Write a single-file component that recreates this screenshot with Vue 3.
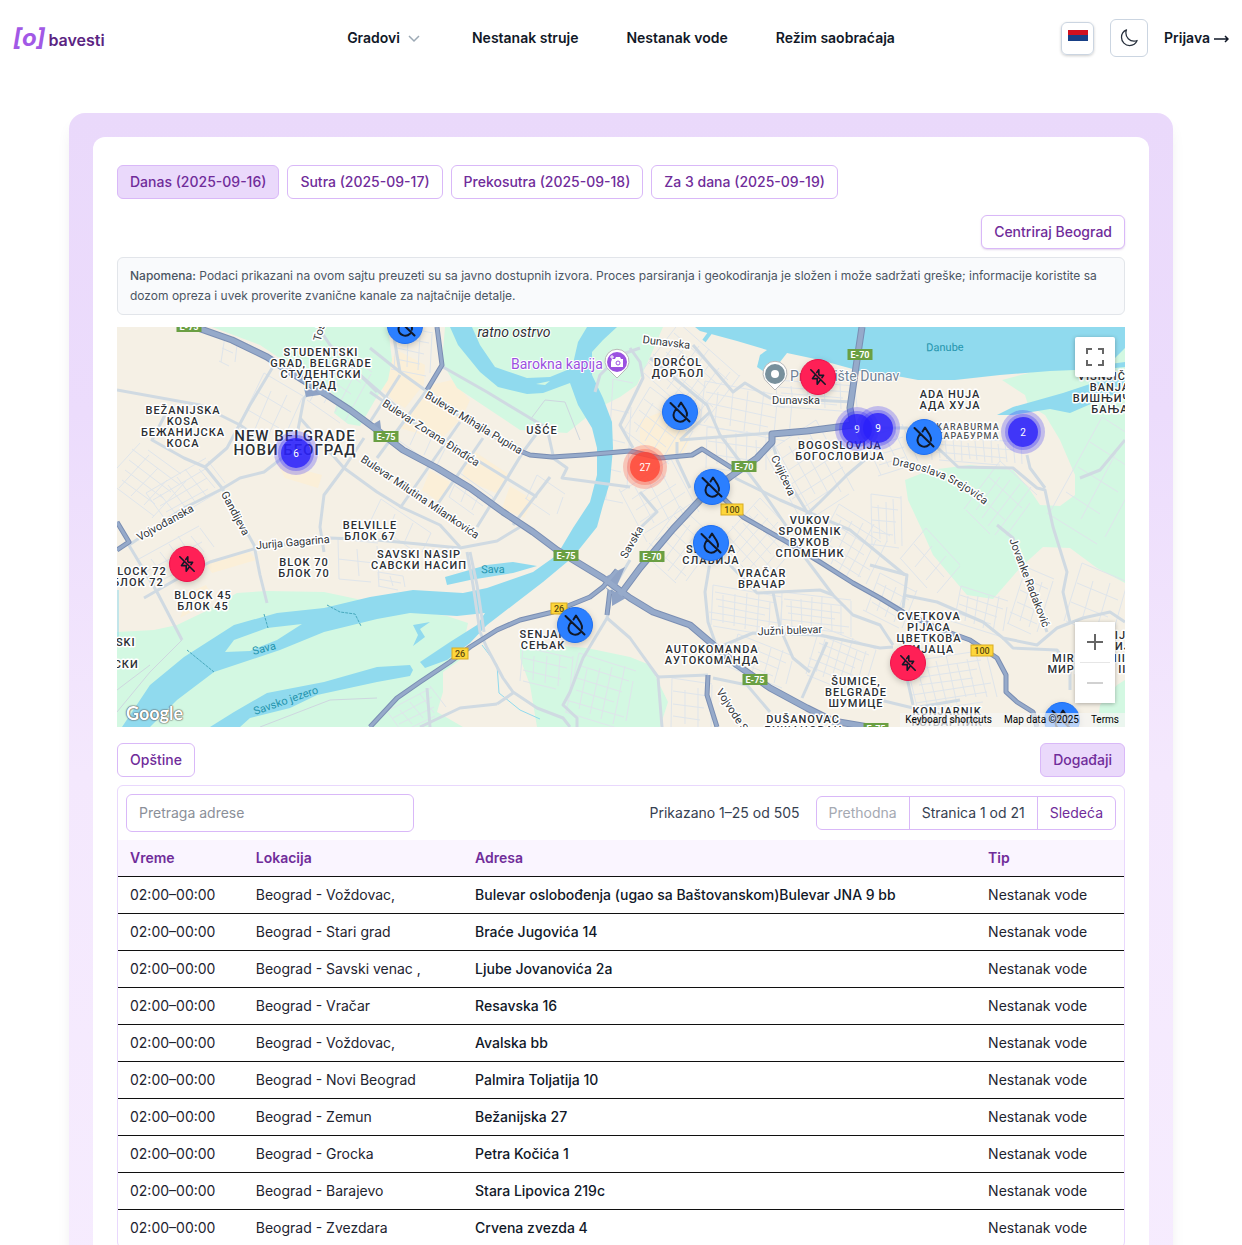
<script setup>
import { ref } from 'vue'

const navLinks = ['Nestanak struje', 'Nestanak vode', 'Režim saobraćaja']

const days = [
  'Danas (2025-09-16)',
  'Sutra (2025-09-17)',
  'Prekosutra (2025-09-18)',
  'Za 3 dana (2025-09-19)',
]
const activeDay = ref(0)
const query = ref('')

const rows = [
  ['02:00–00:00', 'Beograd - Voždovac,', 'Bulevar oslobođenja (ugao sa Baštovanskom)Bulevar JNA 9 bb', 'Nestanak vode'],
  ['02:00–00:00', 'Beograd - Stari grad', 'Braće Jugovića 14', 'Nestanak vode'],
  ['02:00–00:00', 'Beograd - Savski venac ,', 'Ljube Jovanovića 2a', 'Nestanak vode'],
  ['02:00–00:00', 'Beograd - Vračar', 'Resavska 16', 'Nestanak vode'],
  ['02:00–00:00', 'Beograd - Voždovac,', 'Avalska bb', 'Nestanak vode'],
  ['02:00–00:00', 'Beograd - Novi Beograd', 'Palmira Toljatija 10', 'Nestanak vode'],
  ['02:00–00:00', 'Beograd - Zemun', 'Bežanijska 27', 'Nestanak vode'],
  ['02:00–00:00', 'Beograd - Grocka', 'Petra Kočića 1', 'Nestanak vode'],
  ['02:00–00:00', 'Beograd - Barajevo', 'Stara Lipovica 219c', 'Nestanak vode'],
  ['02:00–00:00', 'Beograd - Zvezdara', 'Crvena zvezda 4', 'Nestanak vode'],
]

/* ---- map geometry: all points share the viewBox of the map ---- */
const parks = [
  '212,327 260,345 300,372 325,385 338,400 334,413 348,424 360,426 375,400 388,380 392,360 388,327',
  '445,327 442,362 457,388 520,430 567,433 583,420 600,407 620,397 637,385 650,357 663,327',
  '1002,380 1025,395 1028,405 1045,415 1060,440 1075,475 1075,495 1060,506 1040,505 1030,490 1013,470 970,465 930,470 905,480 908,500 922,530 933,555 967,595 993,599 1020,568 1043,547 1070,548 1097,568 1125,583 1125,348 1090,360 1040,370',
  '117,632 154,630 177,625 204,612 237,593 267,591 324,592 357,599 377,606 447,616 468,623 460,660 443,672 443,692 437,712 463,727 117,727',
  '520,642 550,645 587,648 630,657 650,665 668,702 660,727 537,727 530,685 520,658',
  '1100,705 1117,685 1125,680 1125,727 1097,727',
]
const blocks = [
  '377,383 397,350 425,365 424,384 405,408 395,402',
  '430,385 452,380 470,400 462,418 440,440 400,428',
  '466,462 475,452 508,474 498,494 462,478',
  '510,486 534,500 524,518 502,508',
  '430,470 450,482 440,503 422,490',
  '277,463 322,475 318,488 285,478',
  '190,592 206,585 214,600 180,618',
  '640,420 672,408 690,440 680,460 640,450',
  '205,563 250,552 256,560 212,573',
]
const waters = [
  '695,327 700,331 737,341 767,350 760,355 757,367 763,371 780,362 787,353 820,360 860,371 902,377 918,380 955,380 1000,375 1050,371 1075,370 1115,358 1125,348 1125,327',
  '997,415 1013,407 1063,393 1090,384 1125,376 1125,390 1100,400 1070,413 1050,409 1013,415',
  '1095,366 1125,362 1125,367 1095,370',
  '450,327 458,345 480,372 498,387 527,394 543,393 570,383 578,405 592,428 597,448 597,475 590,502 573,528 557,555 533,572 510,580 487,588 463,593 413,590 370,597 324,608 277,613 234,625 184,657 150,685 122,727 150,727 177,700 214,672 250,660 280,650 324,632 377,619 410,613 457,616 485,613 477,625 450,642 420,662 425,668 447,660 470,643 487,625 517,602 543,582 573,557 597,527 603,505 610,482 613,448 612,422 603,398 592,375 592,352 603,340 617,327 587,327 578,342 572,368 550,377 527,378 495,367 480,345 472,327',
  '210,727 234,712 267,693 324,682 377,667 410,665 413,670 410,676 377,682 317,695 290,708 250,718 240,727',
  '445,577 487,565 513,562 537,566 513,573 470,580 447,585',
  '413,625 430,622 420,629 425,637 413,646 418,635',
]
const island = '225,652 234,640 267,628 302,624 277,640 250,651'

/* A block of side streets: cols x rows lines, turned by `deg` round its centre. */
function grid(cx, cy, w, h, deg, cols, lines) {
  const a = (deg * Math.PI) / 180
  const pt = (x, y) =>
    `${Math.round(cx + x * Math.cos(a) - y * Math.sin(a))} ${Math.round(cy + x * Math.sin(a) + y * Math.cos(a))}`
  let d = ''
  for (let i = 0; i <= cols; i++) {
    const x = -w / 2 + (w * i) / cols
    const cut = ((i * 7) % 4) * (h / 14)
    d += `M${pt(x, -h / 2 + cut)}L${pt(x + 3, h / 2 - cut / 2)}`
  }
  for (let j = 0; j <= lines; j++) {
    const y = -h / 2 + (h * j) / lines
    const cut = ((j * 5) % 4) * (w / 14)
    d += `M${pt(-w / 2 + cut / 2, y)}L${pt(w / 2 - cut, y + 2)}`
  }
  return d
}
const sideStreets = [
  grid(185, 490, 70, 36, -32, 6, 4),
  grid(145, 480, 50, 60, -50, 5, 4),
  grid(270, 410, 46, 60, 28, 3, 3),
  grid(228, 350, 14, 26, 15, 1, 2),
  grid(175, 555, 70, 30, -30, 6, 2),
  grid(340, 385, 40, 60, 32, 3, 4),
  grid(412, 350, 36, 44, 8, 3, 4),
  grid(690, 372, 80, 60, 40, 8, 6),
  grid(660, 425, 60, 50, 35, 5, 4),
  grid(745, 410, 90, 44, 10, 6, 4),
  grid(815, 395, 80, 26, 3, 5, 4),
  grid(735, 450, 60, 40, 5, 6, 3),
  grid(660, 500, 60, 60, 60, 5, 4),
  grid(680, 545, 50, 60, 40, 5, 5),
  grid(810, 470, 80, 60, 60, 6, 5),
  grid(760, 540, 60, 60, 45, 6, 6),
  grid(850, 545, 60, 60, 30, 6, 6),
  grid(745, 610, 70, 40, 8, 6, 6),
  grid(815, 615, 70, 40, 5, 7, 6),
  grid(760, 660, 60, 34, 20, 5, 4),
  grid(840, 660, 60, 50, 20, 7, 6),
  grid(890, 600, 40, 40, 25, 4, 4),
  grid(690, 705, 40, 50, 5, 3, 4),
  grid(950, 680, 80, 50, -10, 8, 6),
  grid(980, 610, 50, 36, 15, 5, 4),
  grid(1030, 600, 30, 60, 20, 3, 5),
  grid(975, 450, 90, 24, 3, 12, 3),
  grid(890, 450, 40, 40, -20, 4, 4),
  grid(1000, 500, 50, 60, 40, 5, 3),
  grid(885, 520, 30, 50, 2, 4, 4),
  grid(930, 560, 50, 40, 45, 3, 2),
  grid(1095, 600, 50, 60, 20, 3, 3),
  grid(1100, 480, 60, 110, 30, 2, 4),
  grid(600, 690, 60, 60, 15, 5, 5),
  grid(545, 668, 50, 34, 10, 4, 3),
  grid(415, 710, 50, 26, -30, 4, 3),
  grid(390, 580, 26, 14, 5, 2, 2),
  grid(545, 495, 34, 26, 30, 1, 1),
  grid(470, 495, 40, 26, 33, 3, 2),
  grid(420, 440, 50, 24, 33, 3, 1),
  grid(400, 525, 60, 24, 33, 3, 1),
  grid(357, 560, 40, 40, 2, 2, 2),
  grid(618, 440, 20, 120, 5, 1, 4),
]

const streets = [
  'M117 390L200 405L240 425L257 437', 'M274 365L250 405L227 448L205 467',
  'M165 415L152 440L184 458L205 467L222 488L254 545L260 575L267 603',
  'M314 388L304 398L297 435L290 452L264 472L240 478L220 490L184 508L129 545',
  'M300 418L344 468L377 492L403 508L440 525L460 547', 'M364 438L344 468L324 495L320 527L324 552',
  'M144 598L184 575L210 562L257 548L330 538L377 540L460 548L497 541L520 527',
  'M127 542L157 592L182 640', 'M377 392L330 345L318 327', 'M318 372L360 375L400 410',
  'M467 552L473 585L480 632L487 648L503 678L513 692L537 708L563 718L570 727',
  'M470 552L477 585L484 632', 'M497 704L513 693', 'M427 688L430 727', 'M420 727L460 708L497 704',
  'M630 560L612 590L607 618L583 658L570 692L563 705L577 718L577 727', 'M607 618L630 638L640 652L658 677L662 727',
  'M658 677L708 675', 'M710 562L705 592L708 622L715 642', 'M717 648L753 633L820 635L880 648L893 647',
  'M730 565L757 593L820 590L833 595L853 615L880 625L893 645', 'M773 592L780 628L793 658L810 672',
  'M827 642L802 698', 'M803 555L833 595', 'M713 678L747 685L770 712',
  'M630 348L640 362L643 378L620 425L633 448', 'M693 345L733 392L745 383L770 398L853 402',
  'M650 358L707 405L720 435L760 488L787 527', 'M680 440L710 412', 'M680 440L770 433', 'M677 442L677 460L690 488',
  'M773 445L780 468L807 512L820 535', 'M867 458L847 475L820 502L803 518', 'M640 492L657 512L640 528',
  'M870 428L907 428L940 450L958 467L1013 468L1037 488L1045 490L1053 527L1067 572L1063 592L1070 622',
  'M1027 455L1030 468L1045 488', 'M870 565L907 575L903 608',
  'M903 595L937 602L983 622L1003 638L1037 645L1057 628L1083 618L1110 612L1125 622',
  'M1003 638L1013 648L1057 650L1070 668L1070 690', 'M907 678L913 705', 'M880 700L913 708L960 700',
  'M997 525L1013 538L1047 632', 'M1125 440L1100 470L1080 478', 'M735 478L780 500L850 530L905 575',
  'M443 367L487 392L530 418L547 428L553 455', 'M400 375L370 422', 'M393 332L400 372L425 390',
  'M370 348L400 372', 'M370 392L413 422L480 462L537 497', 'M427 390L377 458', 'M460 422L400 508', 'M483 438L437 505',
  'M543 425L523 452L503 485L477 527', 'M550 477L513 525', 'M553 458L567 468L562 478L630 487',
  'M427 390L470 425L523 452', 'M595 392L600 375L620 355L640 348',
]
const paths = ['M182 640L150 672L117 712', 'M260 727L330 700L377 698', 'M117 690L150 665', 'M530 420L545 400L565 402L580 440']

const highways = [
  'M195 327L232 340L267 357L290 372L327 395L350 410L377 430L403 450L437 468L470 488L503 512L533 532L557 550L603 578L630 598L653 612L690 625L710 642L737 665L770 688L807 708L833 721L880 729',
  'M862 327L857 360L850 408L853 425L807 431L772 434L772 442L757 458L730 477L700 500L673 529L640 568L620 595',
]
const arterials = [
  'M437 327L442 365L427 390', 'M515 449L530 455L552 457L583 455L630 451L660 458L692 455L702 449L732 468',
  'M720 495L743 517L787 542L820 562L853 583L880 598L903 612L937 628L970 640L997 658L1006 675L1006 692L1017 702L1033 712L1037 727',
  'M370 727L397 698L420 682L450 662L470 647L497 630L520 620L553 612L590 597L603 587L617 570',
  'M708 675L707 695L717 727', 'M117 522L129 542L117 550', 'M610 590L607 615',
]
const junctions = ['617,600 603,585 612,592 622,592', '603,578 625,567 616,588', '370,426 380,420 382,436', '304,388 326,394 306,397', '612,606 612,590 626,598']
const creeks = ['M482 645L497 665L499 693L520 710L540 719', 'M118 590V640']
const ferries = ['M264 614L268 628', 'M187 650L214 672', 'M327 605L340 612L355 614L361 626']

const areas = [
  { x: 321, y: 356, lines: ['STUDENTSKI', 'GRAD, BELGRADE', 'СТУДЕНТСКИ', 'ГРАД'] },
  { x: 183, y: 414, lines: ['BEŽANIJSKA', 'KOSA', 'БЕЖАНИЈСКА', 'КОСА'] },
  { x: 542, y: 434, lines: ['UŠĆE'] },
  { x: 678, y: 366, lines: ['DORĆOL', 'ДОРЋОЛ'] },
  { x: 840, y: 449, lines: ['BOGOSLOVIJA', 'БОГОСЛОВИЈА'] },
  { x: 950, y: 398, lines: ['ADA HUJA', 'АДА ХУЈА'] },
  { x: 1110, y: 380, lines: ['VIŠNJIČKA', 'BANJA', 'ВИШЊИЧКА', 'БАЊА'] },
  { x: 810, y: 524, lines: ['VUKOV', 'SPOMENIK', 'ВУКОВ', 'СПОМЕНИК'] },
  { x: 370, y: 529, lines: ['BELVILLE', 'БЛОК 67'] },
  { x: 419, y: 558, lines: ['SAVSKI NASIP', 'САВСКИ НАСИП'] },
  { x: 304, y: 566, lines: ['BLOK 70', 'БЛОК 70'] },
  { x: 203, y: 599, lines: ['BLOCK 45', 'БЛОК 45'] },
  { x: 138, y: 575, lines: ['BLOCK 72', 'БЛОК 72'] },
  { x: 114, y: 646, lines: ['SAVSKI', '', 'САВСКИ'] },
  { x: 762, y: 577, lines: ['VRAČAR', 'ВРАЧАР'] },
  { x: 711, y: 553, lines: ['SLAVIJA', 'СЛАВИЈА'] },
  { x: 543, y: 638, lines: ['SENJAK', 'СЕЊАК'] },
  { x: 712, y: 653, lines: ['AUTOKOMANDA', 'АУТОКОМАНДА'] },
  { x: 929, y: 620, lines: ['CVETKOVA', 'PIJACA', 'ЦВЕТКОВА', 'ПИЈАЦА'] },
  { x: 856, y: 685, lines: ['ŠUMICE,', 'BELGRADE', 'ШУМИЦЕ'] },
  { x: 803, y: 723, lines: ['DUŠANOVAC', 'ДУШАНОВАЦ'] },
  { x: 947, y: 715, lines: ['KONJARNIK', 'КОЊАРНИК'] },
  { x: 1089, y: 662, lines: ['MIRIJEVO III', 'МИРИЈЕВО III'] },
  { x: 1121, y: 639, lines: ['MIRIJEVO', 'МИРИЈЕВО'] },
  { x: 295, y: 441, size: 'city', step: 14, lines: ['NEW BELGRADE', 'НОВИ БЕОГРАД'] },
  { x: 968, y: 430, size: 'minor', step: 9, lines: ['KARABURMA', 'КАРАБУРМА'] },
]

const roadNames = [
  { x: 666, y: 346, r: 7, t: 'Dunavska' },
  { x: 796, y: 404, r: 0, t: 'Dunavska' },
  { x: 472, y: 426, r: 31, t: 'Bulevar Mihajla Pupina' },
  { x: 429, y: 436, r: 33, t: 'Bulevar Zorana Đinđića' },
  { x: 418, y: 500, r: 34, t: 'Bulevar Milutina Milankovića' },
  { x: 293, y: 546, r: -5, t: 'Jurija Gagarina' },
  { x: 167, y: 526, r: -29, t: 'Vojvođanska' },
  { x: 232, y: 515, r: 62, t: 'Gandijeva' },
  { x: 635, y: 544, r: -60, t: 'Savska' },
  { x: 780, y: 477, r: 65, t: 'Cvijićeva' },
  { x: 790, y: 634, r: -2, t: 'Južni bulevar' },
  { x: 1026, y: 584, r: 69, t: 'Jovanke Radaković' },
  { x: 735, y: 721, r: 57, t: 'Vojvode Stepe' },
  { x: 328, y: 314, r: -75, t: 'Tošin bunar' },
]
const waterNames = [
  { x: 945, y: 351, r: -1, t: 'Danube' },
  { x: 265, y: 652, r: -15, t: 'Sava' },
  { x: 493, y: 573, r: -1, t: 'Sava' },
  { x: 287, y: 704, r: -19, t: 'Savsko jezero' },
]

const shields = [
  { x: 189, y: 326, t: 'E-75' }, { x: 386, y: 436, t: 'E-75' }, { x: 566, y: 555, t: 'E-75' },
  { x: 755, y: 679, t: 'E-75' }, { x: 876, y: 728, t: 'E-75' }, { x: 744, y: 466, t: 'E-70' },
  { x: 860, y: 354, t: 'E-70' }, { x: 652, y: 556, t: 'E-70' },
  { x: 460, y: 653, t: '26', local: true }, { x: 559, y: 608, t: '26', local: true },
  { x: 732, y: 509, t: '100', local: true }, { x: 982, y: 650, t: '100', local: true },
]
const shieldWidth = (s) => (s.local ? (s.t.length > 2 ? 22 : 16) : 25)

const clusters = [
  { x: 296, y: 453, n: 6 }, { x: 857, y: 429, n: 9 }, { x: 878, y: 428, n: 9 },
  { x: 1023, y: 432, n: 2 }, { x: 645, y: 467, n: 27, hot: true },
]
const markers = [
  { x: 405, y: 326 }, { x: 680, y: 412 }, { x: 924, y: 437 }, { x: 712, y: 487 },
  { x: 711, y: 543 }, { x: 575, y: 625 }, { x: 1062, y: 720 },
  { x: 187, y: 564, power: true }, { x: 818, y: 377, power: true }, { x: 908, y: 663, power: true },
]
</script>

<template>
  <div class="page">
    <header class="topbar">
      <a class="brand" href="#"><span class="brand-mark">[o]</span><span class="brand-name">bavesti</span></a>
      <nav class="nav">
        <button class="nav-item nav-menu" type="button">
          Gradovi
          <svg class="chevron" width="20" height="20" viewBox="0 0 20 20" aria-hidden="true">
            <path d="M5 8L10 13L15 8" />
          </svg>
        </button>
        <a v-for="link in navLinks" :key="link" class="nav-item" href="#">{{ link }}</a>
      </nav>
      <div class="tools">
        <button class="flag-btn" type="button" aria-label="Srpski">
          <svg width="20" height="14" viewBox="0 0 20 14" aria-hidden="true">
            <rect width="20" height="6" fill="#d0101f" />
            <rect y="5" width="20" height="6" fill="#173f86" />
            <rect y="11" width="20" height="3" fill="#fff" />
          </svg>
        </button>
        <button class="theme-btn" type="button" aria-label="Tamni režim">
          <svg width="20" height="20" viewBox="0 0 24 24" aria-hidden="true">
            <path d="M21.752 15.002A9.720 9.720 0 0 1 18 15.750c-5.385 0-9.750-4.365-9.750-9.750 0-1.330.266-2.597.748-3.752A9.753 9.753 0 0 0 3 11.250C3 16.635 7.365 21 12.750 21a9.753 9.753 0 0 0 9.002-5.998Z" />
          </svg>
        </button>
        <a class="nav-item login" href="#">Prijava
          <svg width="15" height="10" viewBox="0 0 15 10" aria-hidden="true"><path d="M0 6H14M11 3L14 6L11 9" /></svg>
        </a>
      </div>
    </header>

    <main class="frame">
      <div class="panel">
        <div class="tabs">
          <button
            v-for="(day, i) in days"
            :key="day"
            type="button"
            class="btn"
            :class="{ active: i === activeDay }"
            @click="activeDay = i"
          >{{ day }}</button>
        </div>
        <div class="center-row">
          <button type="button" class="btn raised">Centriraj Beograd</button>
        </div>
        <p class="note">
          <strong>Napomena:</strong> Podaci prikazani na ovom sajtu preuzeti su sa javno dostupnih izvora. Proces parsiranja i
          geokodiranja je složen i može sadržati greške; informacije koristite sa dozom opreza i uvek proverite zvanične kanale
          za najtačnije detalje.
        </p>

        <div class="map">
          <svg class="map-canvas" viewBox="117 327 1008 400" preserveAspectRatio="xMidYMid slice">
            <rect x="117" y="327" width="1008" height="400" fill="#f5f0e5" />
            <polygon v-for="p in blocks" :key="p" :points="p" fill="#fbefd8" />
            <polygon v-for="p in parks" :key="p" :points="p" fill="#d3f8e2" />
            <g class="side"><path v-for="d in sideStreets" :key="d" :d="d" /></g>
            <polygon v-for="p in waters" :key="p" :points="p" fill="#90daee" />
            <polygon :points="island" fill="#d3f8e2" />
            <path d="M536 384L550 381L545 385Z" fill="#d3f8e2" />
            <path d="M704 341L712 330" stroke="#90daee" stroke-width="4" />
            <g class="creek"><path v-for="d in creeks" :key="d" :d="d" /></g>
            <g class="ferry"><path v-for="d in ferries" :key="d" :d="d" /></g>
            <g class="trail"><path v-for="d in paths" :key="d" :d="d" /></g>
            <g class="street"><path v-for="d in streets" :key="d" :d="d" /></g>
            <g class="road-edge thin"><path v-for="d in arterials" :key="d" :d="d" /></g>
            <g class="road-edge"><path v-for="d in highways" :key="d" :d="d" /></g>
            <polygon v-for="p in junctions" :key="p" :points="p" fill="#8fa3c5" />
            <g class="road thin"><path v-for="d in arterials" :key="d" :d="d" /></g>
            <g class="road"><path v-for="d in highways" :key="d" :d="d" /></g>

            <g class="road-name">
              <text v-for="n in roadNames" :key="n.t + n.x" :transform="`translate(${n.x} ${n.y}) rotate(${n.r})`">{{ n.t }}</text>
              <path id="srejovica" d="M892 465Q948 473 988 508" fill="none" stroke="none" />
              <text class="along"><textPath href="#srejovica">Dragoslava Srejovića</textPath></text>
            </g>
            <g class="water-name">
              <text v-for="n in waterNames" :key="n.t + n.x" :transform="`translate(${n.x} ${n.y}) rotate(${n.r})`">{{ n.t }}</text>
            </g>
            <g v-for="a in areas" :key="a.lines[0] + a.x" class="area" :class="a.size">
              <text v-for="(line, i) in a.lines" :key="i" :x="a.x" :y="a.y + i * (a.step || 11)">{{ line }}</text>
            </g>
            <text class="isle-name" x="514" y="337">ratno ostrvo</text>
            <text class="poi purple" x="511" y="369">Barokna kapija</text>
            <text class="poi" x="790" y="381">Pristanište Dunav</text>

            <g transform="translate(617 362)">
              <path d="M0 16L-7 9A12 12 0 1 1 7 9Z" fill="#fff" stroke="#b9b9b9" />
              <circle r="10" fill="#9b51e0" />
              <path d="M-5 -3H-2L-1 -5H3L4 -3H6V5H-6V0Z" fill="#fff" />
              <circle cx="1" cy="1" r="2" fill="#fff" stroke="#9b51e0" stroke-width="1" />
              <path d="M-5 -7V-3M-7 -5H-3" stroke="#fff" />
            </g>
            <g transform="translate(775 374)">
              <path d="M0 16L-7 9A12 12 0 1 1 7 9Z" fill="#fff" stroke="#b9b9b9" />
              <circle r="10" fill="#78909c" />
              <circle r="4" fill="#fff" />
            </g>

            <g v-for="s in shields" :key="s.t + s.x" class="shield" :class="{ local: s.local }" :transform="`translate(${s.x} ${s.y})`">
              <rect :x="-shieldWidth(s) / 2" y="-5" :width="shieldWidth(s)" height="11" />
              <text y="4">{{ s.t }}</text>
            </g>

            <g v-for="c in clusters" :key="c.x" class="cluster" :class="{ hot: c.hot }" :transform="`translate(${c.x} ${c.y})`">
              <circle r="22" opacity="0.25" />
              <circle r="18" opacity="0.3" />
              <circle r="15" opacity="0.8" />
              <text y="4">{{ c.n }}</text>
            </g>
            <g v-for="m in markers" :key="m.x" class="marker" :class="{ power: m.power }" :transform="`translate(${m.x} ${m.y})`">
              <circle r="17.500" />
              <g v-if="m.power" transform="scale(0.800) translate(-12 -12)">
                <path d="M3 3l18 18M15.212 15.210l-4.212 5.790v-7h-6l3.790-5.210m1.685-2.320l2.525-3.470v6m1 1h5l-2.104 2.893" />
              </g>
              <g v-else transform="translate(-12 -12)">
                <path d="M2.500 3l19 18.500M10.500 6.500L13 2.500L17.500 9.500C18.700 11.500 19.300 13.500 18.800 15.800M8 9C6.500 11.300 5.500 13 5.500 15a6.800 6.800 0 0 0 11.500 4.800" />
              </g>
            </g>
          </svg>

          <span class="google">Google</span>
          <button class="map-btn fullscreen" type="button" aria-label="Toggle fullscreen view">
            <svg width="18" height="18" viewBox="0 0 18 18" aria-hidden="true">
              <path d="M0 0v6h2V2h4V0H0zm16 0h-4v2h4v4h2V0h-2zm0 16h-4v2h6v-6h-2v4zM2 12H0v6h6v-2H2v-4z" fill="#666" />
            </svg>
          </button>
          <div class="zoom">
            <button class="map-btn" type="button" aria-label="Zoom in">
              <svg width="18" height="18" viewBox="0 0 18 18" aria-hidden="true"><path d="M17 8h-7V1H8v7H1v2h7v7h2v-7h7z" fill="#666" /></svg>
            </button>
            <button class="map-btn" type="button" aria-label="Zoom out" disabled>
              <svg width="18" height="18" viewBox="0 0 18 18" aria-hidden="true"><path d="M1 8h16v2H1z" fill="#d1d1d1" /></svg>
            </button>
          </div>
          <div class="credits">
            <button type="button">Keyboard shortcuts</button>
            <span>Map data ©2025</span>
            <a href="#">Terms</a>
          </div>
        </div>

        <div class="views">
          <button type="button" class="btn">Opštine</button>
          <button type="button" class="btn active">Događaji</button>
        </div>

        <section class="events">
          <div class="toolbar">
            <input v-model="query" class="search" type="text" placeholder="Pretraga adrese" aria-label="Pretraga adrese" />
            <span class="count">Prikazano 1–25 od 505</span>
            <div class="pager">
              <button type="button" disabled>Prethodna</button>
              <span>Stranica 1 od 21</span>
              <button type="button">Sledeća</button>
            </div>
          </div>
          <table class="table">
            <colgroup><col class="c-time" /><col class="c-place" /><col class="c-address" /><col /></colgroup>
            <thead>
              <tr><th>Vreme</th><th>Lokacija</th><th>Adresa</th><th>Tip</th></tr>
            </thead>
            <tbody>
              <tr v-for="row in rows" :key="row[2]">
                <td>{{ row[0] }}</td>
                <td>{{ row[1] }}</td>
                <td class="address">{{ row[2] }}</td>
                <td>{{ row[3] }}</td>
              </tr>
            </tbody>
          </table>
        </section>
      </div>
    </main>
  </div>
</template>

<style>
body {
  background: #fff;
}
</style>

<style scoped>
.page {
  font-family: Inter, "Noto Sans", sans-serif;
  font-size: 14px;
  line-height: 20px;
  color: #1e2430;
}
.page *,
.page *::before {
  box-sizing: border-box;
}
button,
input {
  font: inherit;
  color: inherit;
}
button {
  margin: 0;
  padding: 0;
  border: 0;
  background: none;
  cursor: pointer;
}
a {
  color: inherit;
  text-decoration: none;
}

/* header */
.topbar {
  display: flex;
  align-items: center;
  padding: 19px 13px;
}
.brand {
  flex: 1;
  display: flex;
  align-items: baseline;
  gap: 3px;
  padding-top: 2px;
  font-weight: 600;
}
.brand-mark {
  font-size: 24px;
  font-weight: 700;
  font-style: italic;
  color: #a259e6;
}
.brand-name {
  font-size: 16px;
  color: #5b2482;
}
.nav {
  display: flex;
  gap: 48px;
}
.nav-item {
  font-weight: 600;
  color: #111827;
}
.nav-menu {
  display: flex;
  align-items: center;
  gap: 4px;
}
.chevron path {
  fill: none;
  stroke: #9ca9b5;
  stroke-width: 1.5;
}
.tools {
  flex: 1;
  display: flex;
  align-items: center;
  justify-content: flex-end;
  gap: 16px;
}
.flag-btn {
  display: flex;
  align-items: flex-start;
  justify-content: center;
  width: 33px;
  height: 33px;
  padding-top: 7px;
  border: 1px solid #cbd5e1;
  border-radius: 6px;
  box-shadow: 0 1px 3px rgba(0, 0, 0, 0.2);
}
.theme-btn {
  display: flex;
  align-items: center;
  justify-content: center;
  width: 38px;
  height: 38px;
  border: 1px solid #cbd5e1;
  border-radius: 6px;
}
.theme-btn path {
  fill: none;
  stroke: #27303d;
  stroke-width: 1.5;
  stroke-linejoin: round;
}
.login {
  display: flex;
  align-items: center;
  gap: 4px;
}
.login path {
  fill: none;
  stroke: #111827;
  stroke-width: 1.5;
}

/* card */
.frame {
  margin: 37px 69px 0;
  padding: 24px;
  border-radius: 16px;
  background: linear-gradient(#ead9fb, #ecdcfc 300px, #f4e8fd 660px, #f6ecfe);
  box-shadow: 0 10px 16px -4px rgba(0, 0, 0, 0.1);
}
.panel {
  padding: 28px 24px;
  border-radius: 12px;
  background: #fff;
}
.tabs {
  display: flex;
  flex-wrap: wrap;
  gap: 8px;
}
.btn {
  padding: 6px 12px;
  border: 1px solid #d9b8f8;
  border-radius: 6px;
  background: #fff;
  font-weight: 500;
  color: #702c9a;
}
.btn.active {
  background: #ead9fb;
}
.btn.raised {
  box-shadow: 0 1px 2px rgba(112, 44, 154, 0.2);
}
.center-row {
  display: flex;
  justify-content: flex-end;
  margin-top: 16px;
}
.note {
  margin: 8px 0 12px;
  padding: 8px 12px;
  border: 1px solid #e2e5ea;
  border-radius: 6px;
  background: #f9fafc;
  font-size: 12px;
  color: #4b5563;
}
.note strong {
  font-weight: 500;
}

/* map */
.map {
  position: relative;
  overflow: hidden;
  font-family: Roboto, "Noto Sans", sans-serif;
}
.map-canvas {
  display: block;
  width: 100%;
  height: 400px;
}
.side,
.trail,
.street,
.road,
.road-edge,
.creek,
.ferry {
  fill: none;
  stroke-linejoin: round;
}
.side {
  stroke: #dfe5eb;
  stroke-width: 1;
}
.trail {
  stroke: #ced6df;
  stroke-width: 1;
}
.street {
  stroke: #d0dae2;
  stroke-width: 3;
}
.road-edge {
  stroke: #7a8eb3;
  stroke-width: 7;
}
.road {
  stroke: #96aaca;
  stroke-width: 5;
}
.road-edge.thin {
  stroke-width: 5;
}
.road.thin {
  stroke-width: 3;
}
.creek {
  stroke: #90daee;
  stroke-width: 1;
}
.ferry {
  stroke: #48a9bd;
  stroke-width: 1;
  stroke-dasharray: 3 1;
}
.map-canvas text {
  text-anchor: middle;
  stroke-linejoin: round;
  paint-order: stroke;
}
.area text {
  font-size: 11px;
  font-weight: 500;
  letter-spacing: 1px;
  fill: #2c2f33;
  stroke: #fff;
  stroke-width: 3;
}
.area.city text {
  font-size: 15px;
}
.area.minor text {
  font-size: 9px;
  fill: #55595e;
}
.road-name text {
  font-size: 11px;
  fill: #33373b;
  stroke: #fff;
  stroke-width: 3;
}
.road-name .along {
  text-anchor: start;
}
.water-name text {
  font-size: 11px;
  fill: #2595ad;
}
.map-canvas .isle-name {
  font-size: 14px;
  font-style: italic;
  fill: #2c2f33;
  stroke: #fff;
  stroke-width: 2;
}
.map-canvas .poi {
  text-anchor: start;
  font-size: 14px;
  fill: #708296;
  stroke: #fff;
  stroke-width: 2;
}
.map-canvas .purple {
  fill: #9b51e0;
}
.shield rect {
  fill: #6a9f43;
}
.shield text {
  font-size: 9px;
  font-weight: 700;
  fill: #fff;
}
.shield.local rect {
  fill: #fdd63b;
  stroke: #d9ab20;
}
.shield.local text {
  font-weight: 500;
  fill: #5c4a10;
}
.cluster {
  fill: #2b20fa;
}
.cluster.hot {
  fill: #ff4433;
}
.cluster text {
  font-size: 10px;
  fill: #fff;
}
.marker circle {
  fill: #2b7fff;
  stroke: #1f6ff0;
  filter: drop-shadow(0 2px 3px rgba(0, 0, 0, 0.2));
}
.marker.power circle {
  fill: #ff2056;
  stroke: #ea1249;
}
.marker path {
  fill: none;
  stroke: #101828;
  stroke-width: 2;
  stroke-linecap: round;
  stroke-linejoin: round;
}
.google {
  position: absolute;
  left: 9px;
  bottom: 2px;
  font-family: Lato, sans-serif;
  font-size: 18px;
  font-weight: 700;
  line-height: 24px;
  color: #fff;
  text-shadow: 0 0 1px #555, 0 0 1px #555, 0 0 2px #666;
}
.map-btn {
  display: flex;
  align-items: center;
  justify-content: center;
  width: 40px;
  height: 40px;
  background: #fff;
}
.fullscreen {
  position: absolute;
  top: 10px;
  right: 10px;
  border-radius: 2px;
  box-shadow: 0 1px 4px rgba(0, 0, 0, 0.3);
}
.zoom {
  position: absolute;
  right: 10px;
  bottom: 24px;
  display: flex;
  flex-direction: column;
  gap: 1px;
  border-radius: 2px;
  background: linear-gradient(90deg, #fff 5px, #e6e6e6 5px 35px, #fff 35px);
  box-shadow: 0 1px 4px rgba(0, 0, 0, 0.3);
}
.credits {
  position: absolute;
  right: 0;
  bottom: 0;
  display: flex;
  gap: 12px;
  padding: 0 6px 0 5px;
  background: rgba(245, 245, 245, 0.7);
  font-size: 10px;
  line-height: 14px;
  color: #000;
}

/* events */
.views {
  display: flex;
  justify-content: space-between;
  margin: 16px 0 8px;
}
.events {
  border: 1px solid #e9d8fd;
  border-radius: 6px;
  overflow: hidden;
}
.toolbar {
  display: flex;
  align-items: center;
  gap: 16px;
  padding: 8px;
}
.search {
  width: 288px;
  padding: 8px 12px;
  border: 1px solid #d9b8f8;
  border-radius: 6px;
  background: #fff;
}
.search::placeholder {
  color: #8b8f98;
  opacity: 1;
}
.count {
  margin-left: auto;
  color: #374151;
}
.pager {
  display: flex;
  border: 1px solid #d9b8f8;
  border-radius: 6px;
}
.pager > * {
  padding: 6px 12px;
  color: #374151;
}
.pager > * + * {
  border-left: 1px solid #d9b8f8;
}
.pager button {
  color: #702c9a;
}
.pager button:disabled {
  color: #a5a9b2;
}
.table {
  width: 100%;
  table-layout: fixed;
  border-collapse: separate;
  border-spacing: 0;
}
.c-time {
  width: 12.5%;
}
.c-place {
  width: 21.8%;
}
.c-address {
  width: 51%;
}
.table th,
.table td {
  padding: 8px 12px;
  border-bottom: 1px solid #101010;
  text-align: left;
}
.table th {
  background: #faf5ff;
  font-weight: 600;
  color: #702c9a;
}
.table .address {
  font-weight: 500;
  color: #101828;
}
</style>
